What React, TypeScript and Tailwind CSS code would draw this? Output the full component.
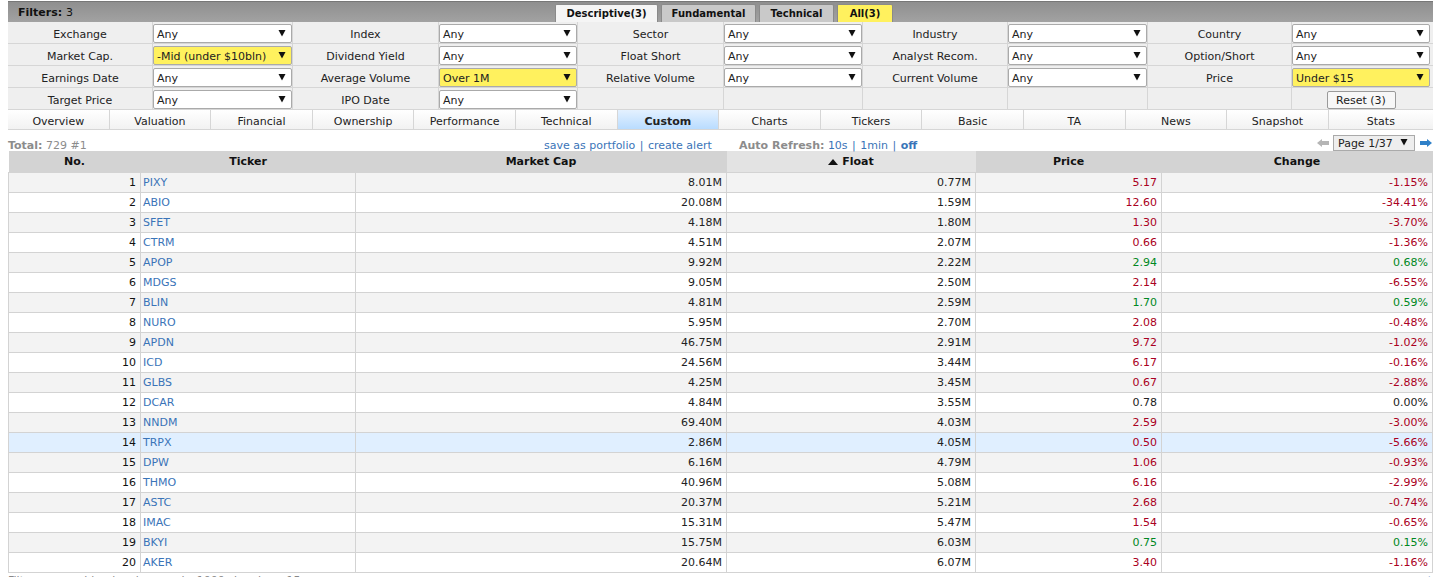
import React from "react";

const filters = [
  ["Exchange", "Any", "Index", "Any", "Sector", "Any", "Industry", "Any", "Country", "Any"],
  ["Market Cap.", "-Mid (under $10bln)", "Dividend Yield", "Any", "Float Short", "Any", "Analyst Recom.", "Any", "Option/Short", "Any"],
  ["Earnings Date", "Any", "Average Volume", "Over 1M", "Relative Volume", "Any", "Current Volume", "Any", "Price", "Under $15"],
  ["Target Price", "Any", "IPO Date", "Any", "", "", "", "", "", ""],
];

const views = ["Overview", "Valuation", "Financial", "Ownership", "Performance", "Technical", "Custom", "Charts", "Tickers", "Basic", "TA", "News", "Snapshot", "Stats"];

const stocks = [
  ["PIXY", "8.01M", "0.77M", "5.17", "-1.15%"],
  ["ABIO", "20.08M", "1.59M", "12.60", "-34.41%"],
  ["SFET", "4.18M", "1.80M", "1.30", "-3.70%"],
  ["CTRM", "4.51M", "2.07M", "0.66", "-1.36%"],
  ["APOP", "9.92M", "2.22M", "2.94", "0.68%"],
  ["MDGS", "9.05M", "2.50M", "2.14", "-6.55%"],
  ["BLIN", "4.81M", "2.59M", "1.70", "0.59%"],
  ["NURO", "5.95M", "2.70M", "2.08", "-0.48%"],
  ["APDN", "46.75M", "2.91M", "9.72", "-1.02%"],
  ["ICD", "24.56M", "3.44M", "6.17", "-0.16%"],
  ["GLBS", "4.25M", "3.45M", "0.67", "-2.88%"],
  ["DCAR", "4.84M", "3.55M", "0.78", "0.00%"],
  ["NNDM", "69.40M", "4.03M", "2.59", "-3.00%"],
  ["TRPX", "2.86M", "4.05M", "0.50", "-5.66%"],
  ["DPW", "6.16M", "4.79M", "1.06", "-0.93%"],
  ["THMO", "40.96M", "5.08M", "6.16", "-2.99%"],
  ["ASTC", "20.37M", "5.21M", "2.68", "-0.74%"],
  ["IMAC", "15.31M", "5.47M", "1.54", "-0.65%"],
  ["BKYI", "15.75M", "6.03M", "0.75", "0.15%"],
  ["AKER", "20.64M", "6.07M", "3.40", "-1.16%"],
];

function Arrow() {
  return (
    <svg width="8" height="8" viewBox="0 0 8 8" className="mb-[2px] shrink-0">
      <path d="M0.5 1h7L4 7.5z" fill="#111" />
    </svg>
  );
}

function FilterSelect({ value }: { value: string }) {
  const active = value !== "Any";
  return (
    <div className={active
      ? "flex h-[19px] w-full items-center justify-between rounded-[2px] border border-[#aaaaaa] bg-[#fff15e] pl-[3px] pr-[5px]"
      : "flex h-[19px] w-full items-center justify-between rounded-[2px] border border-[#aaaaaa] bg-white pl-[3px] pr-[5px]"}>
      <span className="pt-px">{value}</span>
      <Arrow />
    </div>
  );
}

function changeColor(change: string) {
  if (change === "0.00%") return "text-[#222222]";
  return change.startsWith("-") ? "text-[#aa0022]" : "text-[#008822]";
}

export default function App() {
  return (
    <div className="h-[577px] w-[1437px] overflow-hidden bg-white pl-2 pr-[4px] pt-px text-[11px] leading-none text-[#222222] [font-family:'DejaVu_Sans',Verdana,sans-serif]">
      {/* filter title bar */}
      <div className="flex h-[21px] items-end border-t border-[#777777] bg-gradient-to-b from-[#8f8f8f] to-[#a2a2a2]">
        <div className="flex h-full w-[547px] items-center pl-[10px] font-bold text-[#111111]">
          Filters:&nbsp;<span className="font-normal">3</span>
        </div>
        <div className="flex gap-[3px] text-[10px] font-bold text-[#111111]">
          <div className="flex h-[18px] w-[103px] items-center justify-center rounded-t-[2px] border border-b-0 border-[#8a8a8a] bg-[#f5f5f5]">Descriptive(3)</div>
          <div className="flex h-[18px] w-[95px] items-center justify-center rounded-t-[2px] border border-b-0 border-[#8a8a8a] bg-[#c9c9c9]">Fundamental</div>
          <div className="flex h-[18px] w-[75px] items-center justify-center rounded-t-[2px] border border-b-0 border-[#8a8a8a] bg-[#c9c9c9]">Technical</div>
          <div className="flex h-[18px] w-[56px] items-center justify-center rounded-t-[2px] border border-b-0 border-[#8a8a8a] bg-[#fff15e]">All(3)</div>
        </div>
      </div>

      {/* filter grid */}
      <div className="grid grid-cols-[145px_140px_146px_139px_146px_139px_145px_140px_144px_141px]">
        {filters.flat().map((cell, i) => {
          const isLabel = i % 2 === 0;
          const isReset = i === 39;
          return (
            <div key={i} className={i % 10 === 9
              ? "flex h-[22px] items-center justify-center border-b border-[#d6d6d6] bg-[#efefef] pr-[3px] pt-[2px]"
              : "flex h-[22px] items-center justify-center border-b border-r border-[#d6d6d6] bg-[#efefef] pt-[2px]"}>
              {isReset ? (
                <div className="flex h-[18px] w-[69px] items-center justify-center rounded-[2px] border border-[#9a9a9a] bg-[#f7f7f7] pt-px">Reset (3)</div>
              ) : isLabel ? (
                <span className="pt-px">{cell}</span>
              ) : cell ? (
                <FilterSelect value={cell} />
              ) : null}
            </div>
          );
        })}
      </div>

      {/* view tabs */}
      <div className="grid h-[20px] grid-cols-[repeat(13,101.6px)_1fr] border-b border-[#d6d6d6]">
        {views.map((v) => (
          <div key={v} className={v === "Custom"
            ? "flex items-center justify-center border-r border-[#d6d6d6] bg-gradient-to-b from-[#e4f1ff] to-[#b9dcff] pt-[3px] font-bold"
            : "flex items-center justify-center border-r border-[#d6d6d6] bg-gradient-to-b from-white to-[#f2f2f2] pt-[3px] last:border-r-0"}>
            {v}
          </div>
        ))}
      </div>

      {/* total row */}
      <div className="flex h-[21px] items-end text-[#8c8c8c]">
        <div className="w-[536px]"><b>Total:</b> 729 #1</div>
        <div className="w-[195px] text-[#3a74b8]">save as portfolio <span className="mx-px">|</span> create alert</div>
        <div className="w-[578px]">
          <b>Auto Refresh:</b>{" "}
          <span className="text-[#3a74b8]">10s <span className="mx-[1px]">|</span> 1min <span className="mx-[1px]">|</span> <b>off</b></span>
        </div>
        <svg width="12" height="10" viewBox="0 0 12 10" className="mb-[3px] shrink-0"><path d="M0 5l5-4v2h7v4H5v2z" fill="#b5b5b5" /></svg>
        <div className="ml-[4px] flex h-[16px] w-[82px] shrink-0 items-center justify-between border border-[#aaaaaa] bg-[#eeeeee] pl-[4px] pr-[6px] text-[#222222]">
          Page 1/37 <Arrow />
        </div>
        <svg width="12" height="10" viewBox="0 0 12 10" className="mb-[3px] ml-[5px] shrink-0"><path d="M12 5L7 1v2H0v4h7v2z" fill="#2f80c8" /></svg>
      </div>

      {/* results table */}
      <table className="w-[1425px] table-fixed border-collapse">
        <colgroup>
          <col className="w-[132px]" />
          <col className="w-[215px]" />
          <col className="w-[371px]" />
          <col className="w-[249px]" />
          <col className="w-[186px]" />
          <col />
        </colgroup>
        <thead>
          <tr className="h-[21px] bg-[#d3d3d3] font-bold text-[#111111]">
            <th className="p-0">No.</th>
            <th className="p-0">Ticker</th>
            <th className="p-0">Market Cap</th>
            <th className="bg-[#e3e3e3] p-0">
              <span className="inline-flex items-center gap-[4px]">
                <svg width="10" height="6" viewBox="0 0 10 6"><path d="M5 0l5 6H0z" fill="#111" /></svg>
                Float
              </span>
            </th>
            <th className="p-0">Price</th>
            <th className="p-0">Change</th>
          </tr>
        </thead>
        <tbody>
          {stocks.map((s, i) => {
            const rowBg = i === 13 ? "bg-[#e0efff]" : i % 2 === 0 ? "bg-[#f3f3f3]" : "bg-white";
            const color = changeColor(s[4]);
            return (
              <tr key={s[0]} className={"h-[20px] " + rowBg}>
                <td className="border border-[#d3d3d3] p-0 pr-[4px] text-right text-[#111111]">{i + 1}</td>
                <td className="border border-[#d3d3d3] p-0 pl-[2px] text-[#3a74b8]">{s[0]}</td>
                <td className="border border-[#d3d3d3] p-0 pr-[4px] text-right">{s[1]}</td>
                <td className="border border-[#d3d3d3] p-0 pr-[4px] text-right">{s[2]}</td>
                <td className={"border border-[#d3d3d3] p-0 pr-[4px] text-right " + color}>{s[3]}</td>
                <td className={"border border-[#d3d3d3] p-0 pr-[4px] text-right " + color}>{s[4]}</td>
              </tr>
            );
          })}
        </tbody>
      </table>

      <div className="flex justify-between pt-[2px] text-[#888888]">
        <span>Filters: cap_midunder sh_avgvol_o1000 sh_price_u15</span>
        <span className="pr-[1px] text-[#3a74b8]">export</span>
      </div>
    </div>
  );
}
